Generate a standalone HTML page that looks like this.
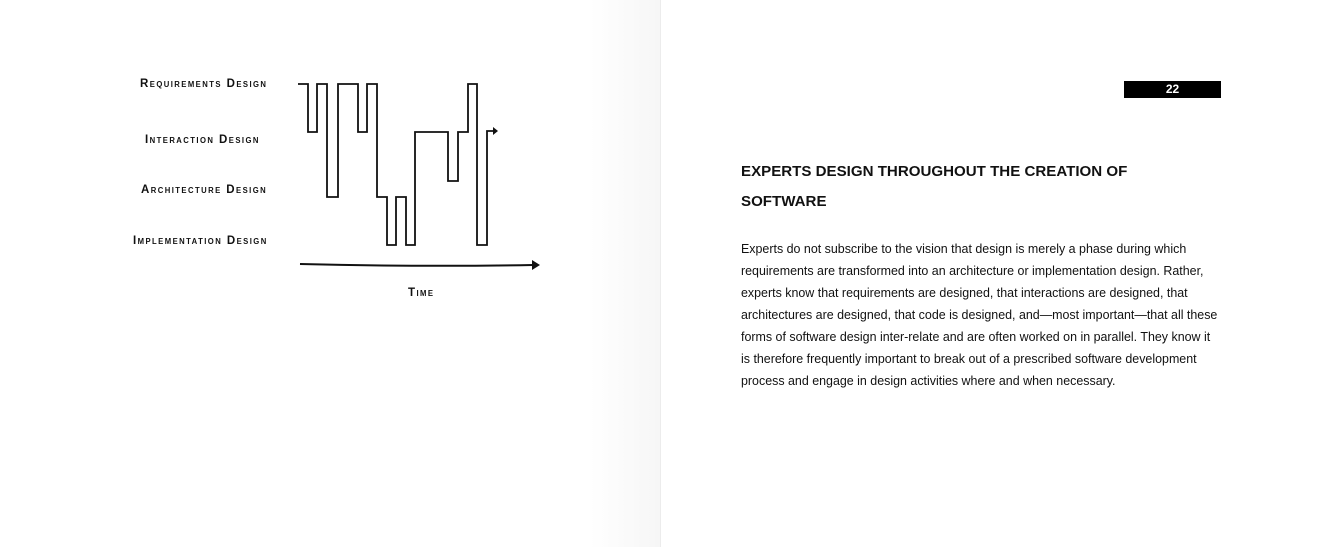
<!DOCTYPE html>
<html><head><meta charset="utf-8"><style>
html,body{margin:0;padding:0;background:#fff;}
body{width:1338px;height:547px;position:relative;overflow:hidden;font-family:"Liberation Sans",sans-serif;}
.shade{position:absolute;left:590px;top:0;width:70px;height:547px;background:linear-gradient(to right,#fff,#f6f6f6);}
.fold{position:absolute;left:660px;top:0;width:1px;height:547px;background:#ececec;}
.lbl{position:absolute;font-size:12px;font-variant:small-caps;letter-spacing:1.5px;color:#111;white-space:nowrap;font-weight:bold;transform:scaleX(0.96);transform-origin:left;}
.num{position:absolute;left:1124px;top:81px;width:97px;height:17px;background:#000;color:#fff;font-weight:bold;font-size:12px;text-align:center;line-height:17px;}
.h{position:absolute;left:741px;top:157px;font-weight:bold;font-size:15.1px;line-height:30px;color:#111;}
.b{position:absolute;left:741px;top:238px;font-size:12.45px;line-height:22px;color:#111;white-space:nowrap;}
</style></head><body>
<div class="shade"></div><div class="fold"></div>
<div class="lbl" style="left:140px;top:76px">Requirements Design</div>
<div class="lbl" style="left:145px;top:132px">Interaction Design</div>
<div class="lbl" style="left:141px;top:182px">Architecture Design</div>
<div class="lbl" style="left:133px;top:233px">Implementation Design</div>
<div class="lbl" style="left:408px;top:285px">Time</div>
<svg style="position:absolute;left:0;top:0" width="660" height="547">
<polyline fill="none" stroke="#111" stroke-width="1.8" points="298,84 308,84 308,132 317,132 317,84 327,84 327,197 338,197 338,84 358,84 358,132 367,132 367,84 377,84 377,197 387,197 387,245 396,245 396,197 406,197 406,245 415,245 415,132 448,132 448,181 458,181 458,132 468,132 468,84 477,84 477,245 487,245 487,131 494,131"/>
<polygon points="493,127 498,131 493,135" fill="#111"/>
<path d="M300,264 Q420,267 533,265" fill="none" stroke="#111" stroke-width="2"/>
<polygon points="532,260 540,265 532,270" fill="#111"/>
</svg>
<div class="num">22</div>
<div class="h">EXPERTS DESIGN THROUGHOUT THE CREATION OF<br>SOFTWARE</div>
<div class="b">Experts do not subscribe to the vision that design is merely a phase during which<br>requirements are transformed into an architecture or implementation design. Rather,<br>experts know that requirements are designed, that interactions are designed, that<br>architectures are designed, that code is designed, and—most important—that all these<br>forms of software design inter-relate and are often worked on in parallel. They know it<br>is therefore frequently important to break out of a prescribed software development<br>process and engage in design activities where and when necessary.</div>
</body></html>
